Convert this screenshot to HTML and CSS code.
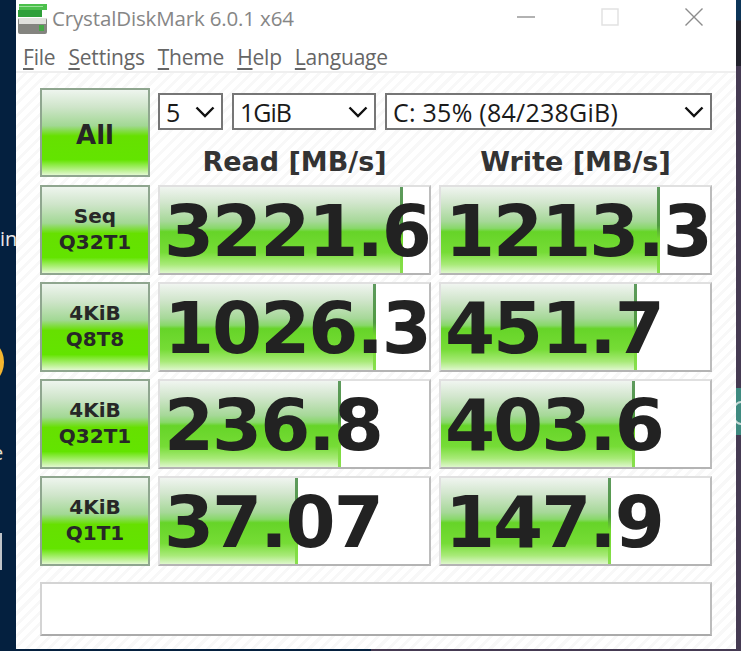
FILE: index.html
```html
<!DOCTYPE html>
<html lang="en">
<head>
<meta charset="utf-8">
<title>CrystalDiskMark 6.0.1 x64</title>
<link rel="stylesheet" href="styles.css">
</head>
<body>
<div class="desktop">
  <span class="bit bit-in">in</span>
  <span class="bit bit-sun"></span>
  <span class="bit bit-e">e</span>
  <span class="bit bit-box"></span>
  <span class="bit bit-top"></span>
  <span class="bit bit-teal"></span>
  <div class="window">
    <header class="titlebar">
      <svg class="appicon" width="30" height="30" viewBox="0 0 30 30">
        <rect x="1" y="0" width="28" height="6" fill="#4cc04c"/>
        <rect x="1" y="2" width="24" height="1" fill="#9be09b"/>
        <rect x="0" y="6" width="24" height="7" fill="#2f9f3a"/>
        <rect x="0" y="14" width="29" height="16" rx="2" fill="#84847f"/>
        <rect x="1" y="14" width="27" height="6" fill="#e0e0dc"/>
        <rect x="21" y="21" width="5" height="6" fill="#46a846"/>
      </svg>
      <span class="title">CrystalDiskMark 6.0.1 x64</span>
      <div class="controls">
        <svg width="18" height="18" viewBox="0 0 18 18"><path d="M0 9H18" stroke="#999" stroke-width="1.5"/></svg>
        <svg width="18" height="18" viewBox="0 0 18 18"><rect x="1" y="1" width="16" height="16" fill="none" stroke="#e2e2e2" stroke-width="1.5"/></svg>
        <svg width="18" height="18" viewBox="0 0 18 18"><path d="M0.5 0.5L17.5 17.5M17.5 0.5L0.5 17.5" stroke="#8c8c8c" stroke-width="1.4"/></svg>
      </div>
    </header>
    <nav class="menu">
      <span><u>F</u>ile</span>
      <span><u>S</u>ettings</span>
      <span><u>T</u>heme</span>
      <span><u>H</u>elp</span>
      <span><u>L</u>anguage</span>
    </nav>
    <main class="client">
      <div class="grid">
        <div class="btn btn-all">All</div>
        <div class="topcell">
          <div class="selects">
            <div class="select sel-count"><span>5</span><svg class="chev" width="20" height="12" viewBox="0 0 20 12"><path d="M1.5 1.5L10 10L18.5 1.5" fill="none" stroke="#111" stroke-width="2.4"/></svg></div>
            <div class="select sel-size"><span>1GiB</span><svg class="chev" width="20" height="12" viewBox="0 0 20 12"><path d="M1.5 1.5L10 10L18.5 1.5" fill="none" stroke="#111" stroke-width="2.4"/></svg></div>
            <div class="select sel-drive"><span>C: 35% (84/238GiB)</span><svg class="chev" width="20" height="12" viewBox="0 0 20 12"><path d="M1.5 1.5L10 10L18.5 1.5" fill="none" stroke="#111" stroke-width="2.4"/></svg></div>
          </div>
          <div class="heads">
            <div class="head">Read [MB/s]</div>
            <div class="head">Write [MB/s]</div>
          </div>
        </div>

        <div class="btn">Seq<br>Q32T1</div>
        <div class="meter"><div class="fill" style="width:90.3%"></div><span class="val">3221.6</span></div>
        <div class="meter"><div class="fill" style="width:81.4%"></div><span class="val">1213.3</span></div>

        <div class="btn">4KiB<br>Q8T8</div>
        <div class="meter"><div class="fill" style="width:80.3%"></div><span class="val">1026.3</span></div>
        <div class="meter"><div class="fill" style="width:72.9%"></div><span class="val">451.7</span></div>

        <div class="btn">4KiB<br>Q32T1</div>
        <div class="meter"><div class="fill" style="width:67.3%"></div><span class="val">236.8</span></div>
        <div class="meter"><div class="fill" style="width:72.1%"></div><span class="val">403.6</span></div>

        <div class="btn">4KiB<br>Q1T1</div>
        <div class="meter"><div class="fill" style="width:51.3%"></div><span class="val">37.07</span></div>
        <div class="meter"><div class="fill" style="width:63.2%"></div><span class="val">147.9</span></div>
      </div>
      <div class="comment"></div>
    </main>
  </div>
</div>
</body>
</html>
```

FILE: styles.css
```css
* { box-sizing: border-box; }
html, body { margin: 0; padding: 0; }
body { width: 741px; height: 651px; overflow: hidden; }

.desktop {
  position: relative;
  width: 741px;
  height: 651px;
  overflow: hidden;
  background: linear-gradient(90deg, #04203f 0, #04203f 50%, #453a52 50%, #453a52 100%);
  padding: 0 5px 2px 16px;
}
.bit { position: absolute; display: block; }
.bit-in { left: 0; top: 227px; color: #e8e8e8; font: 20px/24px "Open Sans", sans-serif; }
.bit-sun { left: -40px; top: 338px; width: 44px; height: 48px; border-radius: 50%; background: #f5b62f; }
.bit-e { left: -8px; top: 441px; color: #e8e0d0; font: 20px/24px "Open Sans", sans-serif; }
.bit-box { left: 0; top: 533px; width: 2px; height: 37px; background: #c0c4c8; }
.bit-top { left: 736px; top: 0; width: 5px; height: 66px; background: linear-gradient(180deg, #0c3558 0, #0c3558 30%, #22222c 32%, #22222c 100%); }
.bit-teal { left: 736px; top: 388px; width: 5px; height: 47px; background: #3f8a80; overflow: hidden; }
.bit-teal::after {
  content: "";
  position: absolute;
  left: -4px;
  top: 13px;
  width: 14px;
  height: 20px;
  border: 2px solid #c8dcd8;
  border-radius: 50%;
}

.window {
  width: 720px;
  height: 649px;
  background: #fff;
  display: flex;
  flex-direction: column;
}

.titlebar {
  height: 36px;
  display: flex;
  align-items: center;
  padding: 0 0 0 2px;
}
.appicon { flex: none; margin-top: 2px; }
.title {
  margin-left: 4px;
  font: 20.5px/30px "Open Sans", sans-serif;
  color: #868686;
  letter-spacing: -0.15px;
}
.controls {
  margin-left: auto;
  display: flex;
  gap: 66px;
  padding-right: 33px;
  margin-top: -2px;
}

.menu {
  height: 37px;
  display: flex;
  gap: 13px;
  padding: 6px 0 0 7px;
  align-items: center;
  font: 21px/26px "Open Sans", sans-serif;
  letter-spacing: -0.2px;
  color: #666;
  border-bottom: 2px solid #efefef;
}
.menu u { text-underline-offset: 3px; }

.client {
  flex: 1;
  padding: 15px 24px 0 24px;
  background: repeating-linear-gradient(135deg, #fff 0, #fff 5px, #f8f8f8 5px, #f8f8f8 8px);
}

.grid {
  display: grid;
  grid-template-columns: 110px 273px 273px;
  grid-template-rows: 90px 90px 90px 90px 90px;
  column-gap: 8px;
  row-gap: 7px;
}
.btn {
  border: 2px solid #8fa68f;
  background: linear-gradient(180deg, #eef5ee 0%, #cfe5ca 20%, #a2d894 42%, #66e000 54%, #63e400 82%, #e2f8d0 100%);
  display: flex;
  align-items: center;
  justify-content: center;
  text-align: center;
  color: #272727;
  font: bold 20px/26px "DejaVu Sans", sans-serif;
  padding-bottom: 3px;
}
.btn-all { font-size: 26px; line-height: 32px; padding: 5px 0 0; height: 89px; }

.topcell {
  grid-column: 2 / 4;
  display: flex;
  flex-direction: column;
  padding-top: 5px;
}
.selects { display: flex; gap: 9px; width: 554px; }
.select {
  height: 37px;
  border: 2px solid #767676;
  background: #fff;
  display: flex;
  align-items: center;
  justify-content: space-between;
  padding: 0 6px 0 6px;
  font: 25px/30px "Open Sans", sans-serif;
  color: #1a1a1a;
}
.sel-count { width: 65px; }
.sel-size { width: 144px; letter-spacing: -1px; }
.sel-drive { width: 327px; letter-spacing: 0.25px; }
.heads {
  display: grid;
  grid-template-columns: 273px 273px;
  column-gap: 8px;
  margin-top: 15px;
}
.head {
  text-align: center;
  font: bold 27px/34px "DejaVu Sans", sans-serif;
  color: #333;
}

.meter {
  position: relative;
  border: 2px solid;
  border-color: #e0e0e0 #bcbcbc #b4b4b4 #e0e0e0;
  background: #fff;
  overflow: hidden;
}
.fill {
  height: 100%;
  border-right: 3px solid;
  border-image: linear-gradient(180deg, #5f9a5f 0%, #4f9a40 45%, #70d82a 60%, #8ae050 100%) 1;
  background: linear-gradient(180deg, #f0f5f0 0%, #d2e6cd 18%, #a6d898 40%, #88d86a 48%, #66d428 52%, #76dc36 76%, #a8ea78 90%, #def7cc 100%);
}
.val {
  position: absolute;
  left: 4px;
  top: 2px;
  font: bold 72px/84px "DejaVu Sans", sans-serif;
  letter-spacing: -2px;
  color: #222;
  white-space: nowrap;
}

.comment {
  margin-top: 16px;
  width: 672px;
  height: 54px;
  border: 2px solid;
  border-color: #d4d4d4 #bcbcbc #aaaaaa #d4d4d4;
  background: #fff;
}
```
